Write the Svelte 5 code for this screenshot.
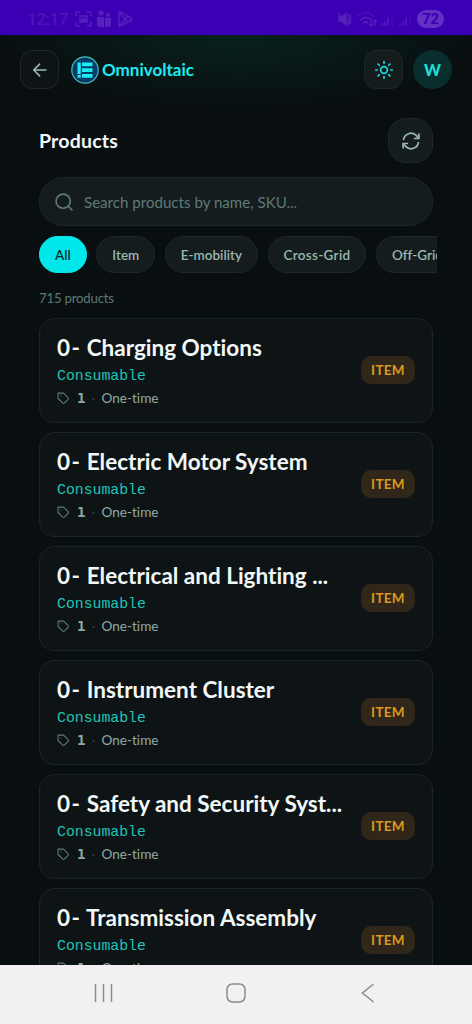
<script>
  const filters = ['All', 'Item', 'E-mobility', 'Cross-Grid', 'Off-Grid']

  const products = [
    'Charging Options',
    'Electric Motor System',
    'Electrical and Lighting ...',
    'Instrument Cluster',
    'Safety and Security Syst...',
    'Transmission Assembly',
  ].map((name) => ({ prefix: '0-', name, category: 'Consumable', count: 1, billing: 'One-time', type: 'ITEM' }))

  let active = $state('All')
  let query = $state('')
</script>

<div class="phone">
  <div class="status">
    <span class="clock">12:17</span>
    <svg class="left-icons" width="58" height="18" viewBox="0 0 58 18" fill="none" stroke="currentColor" stroke-width="1.5">
      <path d="M1 6V4q0-2 2-2h2M12 2h2q2 0 2 2v2M16 12v2q0 2-2 2h-2M5 16H3q-2 0-2-2v-2" />
      <path d="M5 6h7v6H5z" />
      <path d="M6 11l3-3 3 3z" fill="currentColor" />
      <g fill="currentColor" stroke="none">
        <circle cx="26" cy="3" r="2.5" /><circle cx="33" cy="5" r="2" />
        <path d="M22 7h7v10h-4q-3 0-3-3zM30 8h6v6q0 3-3 3h-3z" />
      </g>
      <path d="M44 2.500v13q0 1 1 .5L56.500 10q1-.8 0-1.600L45.500 2q-1.500-.5-1.500.5zM44.500 3l8 8.500M44.500 15.500L52.500 7" />
    </svg>
    <svg class="right-icons" width="74" height="18" viewBox="0 0 74 18" fill="none" stroke="currentColor" stroke-width="1.3">
      <path d="M1 7h3l4-4v12l-4-4H1z" fill="currentColor" />
      <path d="M0 3l11 12M11 4l-1 2 1 2-1 2 1 2-1 2M13 4l-1 2 1 2-1 2 1 2-1 2" />
      <path d="M19 7q9-8 18 0" opacity=".5" />
      <path d="M22 10q6-5 12 0M25 13q3-2.500 5 0" />
      <path d="M33 10v6m-2-2l2 2 2-2M37 16v-6m-2 2l2-2 2 2" stroke-width="1.2" />
      <path d="M44 13v3M47 11v5M50 7v9M62 13v3M65 11v5M68 7v9" />
      <path d="M54 4v12M72 4v12" opacity=".4" />
    </svg>
    <span class="battery">72</span>
  </div>

  <header>
    <button class="square" aria-label="Back">
      <svg width="20" height="20" viewBox="0 0 24 24" fill="none" stroke="currentColor" stroke-width="2" stroke-linecap="round" stroke-linejoin="round">
        <path d="M19 12H4.500M11.500 5l-7 7 7 7" />
      </svg>
    </button>
    <div class="brand">
      <svg width="28" height="28" viewBox="0 0 28 28">
        <circle cx="14" cy="14" r="13.2" fill="#063a67" stroke="#4bbfc0" stroke-width="1.2" />
        <g fill="#1cecf2">
          <path d="M6.500 6.500h3.300v11.500H6.500zM6.500 19h3.300v2.700H6.500z" />
          <path d="M11 6.500h10.500v3.800H11zM11 12.200h10.500V16H11zM11 17.900h10.500v3.800H11z" />
        </g>
      </svg>
      <span>Omnivoltaic</span>
    </div>
    <button class="square theme" aria-label="Toggle theme">
      <svg width="20" height="20" viewBox="0 0 24 24" fill="none" stroke="currentColor" stroke-width="2" stroke-linecap="round">
        <circle cx="12" cy="12" r="4" />
        <path d="M12 2v2M12 20v2M4.930 4.930l1.410 1.410M17.660 17.660l1.410 1.410M2 12h2M20 12h2M6.340 17.660l-1.410 1.410M19.070 4.930l-1.410 1.410" />
      </svg>
    </button>
    <span class="avatar">W</span>
  </header>

  <main>
    <div class="heading">
      <h1>Products</h1>
      <button class="refresh" aria-label="Refresh">
        <svg width="20" height="20" viewBox="0 0 24 24" fill="none" stroke="currentColor" stroke-width="2">
          <path d="M21.500 3v6h-6M2.500 21v-6h6" />
          <path d="M3 11a9 9 0 0 1 15.500-5.500L21.500 9M2.500 15l3 3.500A9 9 0 0 0 21 13" />
        </svg>
      </button>
    </div>

    <label class="search">
      <svg width="20" height="20" viewBox="0 0 24 24" fill="none" stroke="currentColor" stroke-width="2" stroke-linecap="round">
        <circle cx="11" cy="11" r="8.5" />
        <path d="M21.500 21.500l-4.400-4.400" />
      </svg>
      <input bind:value={query} placeholder="Search products by name, SKU..." />
    </label>

    <div class="filters">
      {#each filters as filter}
        <button class="chip" class:active={active === filter} onclick={() => (active = filter)}>{filter}</button>
      {/each}
    </div>

    <p class="total">715 products</p>

    <div class="list">
      {#each products as product}
        <article>
          <div class="info">
            <h2><span>{product.prefix}</span> {product.name}</h2>
            <div class="category">{product.category}</div>
            <div class="meta">
              <svg width="13" height="13" viewBox="0 0 24 24" fill="none" stroke="currentColor" stroke-width="2" stroke-linejoin="round">
                <path d="M20.590 13.410l-7.170 7.170a2 2 0 0 1-2.830 0L2 12V2h10l8.590 8.590a2 2 0 0 1 0 2.820z" />
                <path d="M7 7h.01" stroke-linecap="round" />
              </svg>
              <b>{product.count}</b>
              <i>·</i>
              <span>{product.billing}</span>
            </div>
          </div>
          <span class="badge">{product.type}</span>
        </article>
      {/each}
    </div>
  </main>

  <nav>
    <svg width="20" height="20" viewBox="0 0 20 20"><path d="M1.500 1v18M9.500 1v18M17.500 1v18" /></svg>
    <svg width="20" height="20" viewBox="0 0 20 20"><rect x="1" y="1" width="18" height="18" rx="5.5" /></svg>
    <svg width="20" height="20" viewBox="0 0 20 20"><path d="M15.500 1L4.500 10l11 9" /></svg>
  </nav>
</div>

<style>
  :global(body) {
    background: #090f10;
  }

  .phone {
    display: flex;
    flex-direction: column;
    height: 1024px;
    overflow: hidden;
    box-sizing: border-box;
    font-family: Lato, 'Liberation Sans', sans-serif;
    font-variant-ligatures: none;
    color: #f2f8f8;
    background: radial-gradient(ellipse 240px 75px at 236px 35px, #08211e, transparent), #090f10;
  }

  button {
    display: flex;
    align-items: center;
    justify-content: center;
    padding: 0;
    font: inherit;
    box-sizing: border-box;
    color: #9ab8b3;
    background: #151c1d;
    border: 1px solid #1e2828;
  }

  .status {
    display: flex;
    align-items: center;
    flex: none;
    height: 35px;
    padding: 3px 28px 0 27px;
    box-sizing: border-box;
    background: #3b00b3;
    color: #5620bb;
  }

  .clock {
    width: 48px;
    font: 500 17px Roboto, sans-serif;
    letter-spacing: -0.4px;
    color: #4e16b5;
  }

  .right-icons {
    margin-left: auto;
  }

  .battery {
    width: 27px;
    margin-left: 5px;
    border-radius: 9px;
    background: #6130c4;
    color: #3b00b3;
    font: 700 15px/18px Roboto, sans-serif;
    text-align: center;
  }

  header {
    display: flex;
    align-items: center;
    flex: none;
    height: 69px;
    padding: 0 20px;
    box-sizing: border-box;
  }

  .square {
    width: 39px;
    height: 39px;
    border-radius: 12px;
    background: #0e1415;
  }

  .theme {
    margin-left: auto;
    color: #20dbd7;
    background: #151c1d;
  }

  .brand {
    display: flex;
    align-items: center;
    gap: 3px;
    margin-left: 12px;
    color: #1cecf2;

    & span {
      font-size: 17px;
      font-weight: 700;
    }
  }

  .avatar {
    width: 39px;
    margin-left: 10px;
    border-radius: 50%;
    background: #092e2d;
    color: #20dbd7;
    font-size: 16px;
    font-weight: 900;
    line-height: 39px;
    text-align: center;
  }

  main {
    flex: 1;
    min-height: 0;
    padding: 14px 39px 0;
    overflow: hidden;
  }

  .heading {
    display: flex;
    align-items: center;
    justify-content: space-between;
    height: 45px;
  }

  h1 {
    margin: 0;
    font-size: 19.5px;
    font-weight: 700;
    letter-spacing: 0.2px;
  }

  .refresh {
    width: 45px;
    height: 45px;
    border-radius: 18px;
  }

  .search {
    display: flex;
    align-items: center;
    gap: 10px;
    height: 49px;
    margin-top: 14px;
    padding: 0 14px;
    box-sizing: border-box;
    border: 1px solid #1e2828;
    border-radius: 25px;
    background: #151c1d;
    color: #5c7a77;

    & input {
      flex: 1;
      min-width: 0;
      padding: 0;
      border: 0;
      outline: none;
      background: none;
      color: #f2f8f8;
      font: 15.1px Lato, sans-serif;
    }

    & input::placeholder {
      color: #5c7a77;
      opacity: 1;
    }
  }

  .filters {
    display: flex;
    gap: 9.5px;
    margin: 10px -4px 0 0;
    overflow: hidden;
  }

  .chip {
    flex: none;
    height: 37px;
    padding: 0 15px;
    border-radius: 19px;
    font-size: 13.5px;
    font-weight: 600;

    &:nth-child(4) {
      letter-spacing: 0.3px;
    }
  }

  .active {
    color: #07292b;
    background: #00e8ea;
    border-color: #00e8ea;
  }

  .total {
    margin: 16px 0 11px;
    font-size: 13.2px;
    line-height: 18px;
    letter-spacing: -0.2px;
    color: #5c7a77;
  }

  .list {
    display: grid;
    gap: 9px;
  }

  article {
    display: flex;
    align-items: center;
    justify-content: space-between;
    height: 105px;
    padding: 0 17px;
    box-sizing: border-box;
    border: 1px solid #1a2525;
    border-radius: 15px;
    background: #0e1415;
  }

  h2 {
    margin: 0;
    font-size: 22.5px;
    font-weight: 700;
    line-height: 29px;
    white-space: nowrap;

    & span {
      letter-spacing: 1.4px;
    }
  }

  .category {
    margin-top: 4px;
    font: 14.8px/20px 'Liberation Mono', monospace;
    color: #1fc5b8;
  }

  .meta {
    display: flex;
    align-items: center;
    margin-top: 2px;
    height: 20px;
    font-size: 13.6px;
    color: #8faaa6;

    & svg {
      color: #5c7a77;
    }

    & b {
      margin-left: 7px;
      font: 700 14px 'DejaVu Sans Mono', monospace;
    }

    & i {
      width: 16px;
      color: #26413f;
      text-align: center;
    }
  }

  .badge {
    width: 54px;
    margin-bottom: 1px;
    border-radius: 10px;
    background: #30271a;
    color: #dd971f;
    font-size: 13.5px;
    font-weight: 700;
    line-height: 28px;
    letter-spacing: 0.3px;
    text-align: center;
  }

  nav {
    display: flex;
    justify-content: space-between;
    flex: none;
    height: 59px;
    padding: 18px 94px 0;
    box-sizing: border-box;
    background: #f1f0f3;

    & svg {
      fill: none;
      stroke: #8b8a8d;
      stroke-width: 1.5;
    }
  }
</style>
